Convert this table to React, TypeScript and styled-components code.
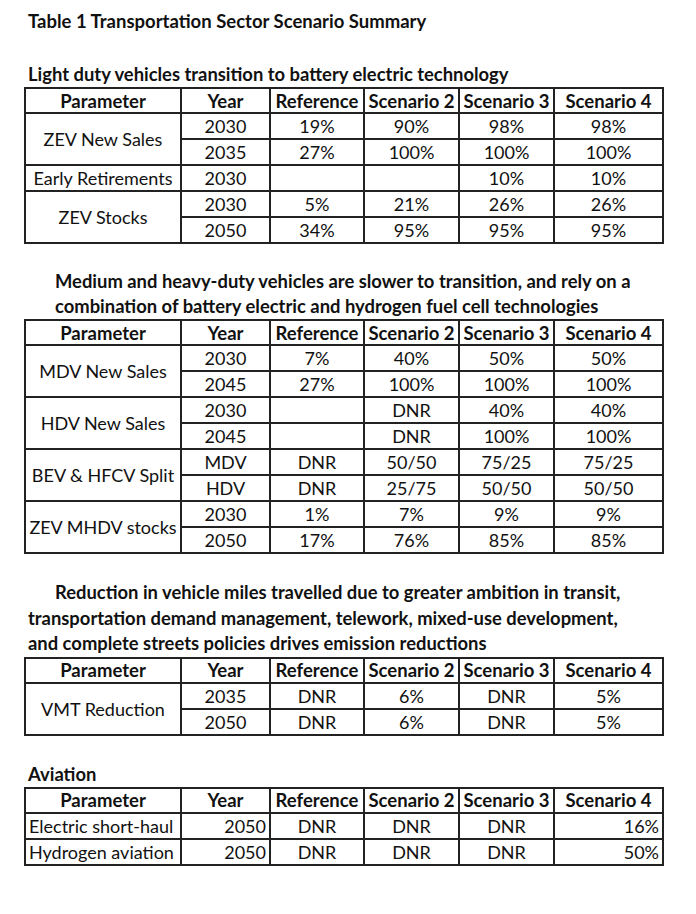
import React from "react";
import styled, { createGlobalStyle } from "styled-components";

const Global = createGlobalStyle`
  html, body { margin: 0; padding: 0; background: #fff; }
  body { font-family: Lato, "Open Sans", "Liberation Sans", sans-serif; color: #111; }
`;

const Page = styled.div`
  width: 696px;
  padding: 10px 0 0 24px;
  box-sizing: border-box;
`;

const Title = styled.div`
  font-weight: 700;
  font-size: 18.5px;
  line-height: 22px;
  padding-left: 4px;
  white-space: nowrap;
`;

const Heading = styled.div<{ $indent?: number; $first?: number; $top: number; $lh?: number }>`
  font-weight: 700;
  font-size: 18.4px;
  line-height: ${(p) => p.$lh ?? 25}px;
  padding-left: ${(p) => p.$indent ?? 4}px;
  text-indent: ${(p) => p.$first ?? 0}px;
  margin-top: ${(p) => p.$top}px;
  white-space: nowrap;
`;

const Table = styled.table`
  border-collapse: collapse;
  table-layout: fixed;
  width: 638px;
  font-size: 18px;
`;

const Th = styled.th`
  border: 2px solid #222;
  font-weight: 700;
  font-size: 18.5px;
  height: 23px;
  padding: 0 1px;
  text-align: center;
  white-space: nowrap;
  line-height: 22px;
`;

const Td = styled.td<{ $align?: string }>`
  border: 2px solid #222;
  height: 24px;
  padding: 0 3px;
  text-align: ${(p) => p.$align ?? "center"};
  vertical-align: middle;
  white-space: nowrap;
  font-weight: 400;
  line-height: 22px;
`;

type Cell = { t: string; span?: number; align?: string };
type Row = Cell[];

const widths = [156, 89, 94, 95, 95, 109];
const heads = ["Parameter", "Year", "Reference", "Scenario 2", "Scenario 3", "Scenario 4"];

function DataTable({ rows }: { rows: Row[] }) {
  return (
    <Table>
      <colgroup>
        {widths.map((w, i) => (
          <col key={i} style={{ width: w }} />
        ))}
      </colgroup>
      <thead>
        <tr>
          {heads.map((h) => (
            <Th key={h}>{h}</Th>
          ))}
        </tr>
      </thead>
      <tbody>
        {rows.map((r, i) => (
          <tr key={i}>
            {r.map((c, j) => (
              <Td key={j} rowSpan={c.span} $align={c.align}>
                {c.t}
              </Td>
            ))}
          </tr>
        ))}
      </tbody>
    </Table>
  );
}

const c = (t: string, span?: number, align?: string): Cell => ({ t, span, align });

const ldv: Row[] = [
  [c("ZEV New Sales", 2), c("2030"), c("19%"), c("90%"), c("98%"), c("98%")],
  [c("2035"), c("27%"), c("100%"), c("100%"), c("100%")],
  [c("Early Retirements"), c("2030"), c(""), c(""), c("10%"), c("10%")],
  [c("ZEV Stocks", 2), c("2030"), c("5%"), c("21%"), c("26%"), c("26%")],
  [c("2050"), c("34%"), c("95%"), c("95%"), c("95%")],
];

const mhdv: Row[] = [
  [c("MDV New Sales", 2), c("2030"), c("7%"), c("40%"), c("50%"), c("50%")],
  [c("2045"), c("27%"), c("100%"), c("100%"), c("100%")],
  [c("HDV New Sales", 2), c("2030"), c(""), c("DNR"), c("40%"), c("40%")],
  [c("2045"), c(""), c("DNR"), c("100%"), c("100%")],
  [c("BEV & HFCV Split", 2), c("MDV"), c("DNR"), c("50/50"), c("75/25"), c("75/25")],
  [c("HDV"), c("DNR"), c("25/75"), c("50/50"), c("50/50")],
  [c("ZEV MHDV stocks", 2), c("2030"), c("1%"), c("7%"), c("9%"), c("9%")],
  [c("2050"), c("17%"), c("76%"), c("85%"), c("85%")],
];

const vmt: Row[] = [
  [c("VMT Reduction", 2), c("2035"), c("DNR"), c("6%"), c("DNR"), c("5%")],
  [c("2050"), c("DNR"), c("6%"), c("DNR"), c("5%")],
];

const aviation: Row[] = [
  [c("Electric short-haul", undefined, "left"), c("2050", undefined, "right"), c("DNR"), c("DNR"), c("DNR"), c("16%", undefined, "right")],
  [c("Hydrogen aviation", undefined, "left"), c("2050", undefined, "right"), c("DNR"), c("DNR"), c("DNR"), c("50%", undefined, "right")],
];

export default function App() {
  return (
    <Page>
      <Global />
      <Title>Table 1 Transportation Sector Scenario Summary</Title>
      <Heading $top={29} $lh={26}>Light duty vehicles transition to battery electric technology</Heading>
      <DataTable rows={ldv} />
      <Heading $top={25} $indent={31}>
        Medium and heavy-duty vehicles are slower to transition, and rely on a
        <br />
        combination of battery electric and hydrogen fuel cell technologies
      </Heading>
      <DataTable rows={mhdv} />
      <Heading $top={26} $first={27} $lh={25.5}>
        Reduction in vehicle miles travelled due to greater ambition in transit,
        <br />
        transportation demand management, telework, mixed-use development,
        <br />
        and complete streets policies drives emission reductions
      </Heading>
      <DataTable rows={vmt} />
      <Heading $top={26}>Aviation</Heading>
      <DataTable rows={aviation} />
    </Page>
  );
}
